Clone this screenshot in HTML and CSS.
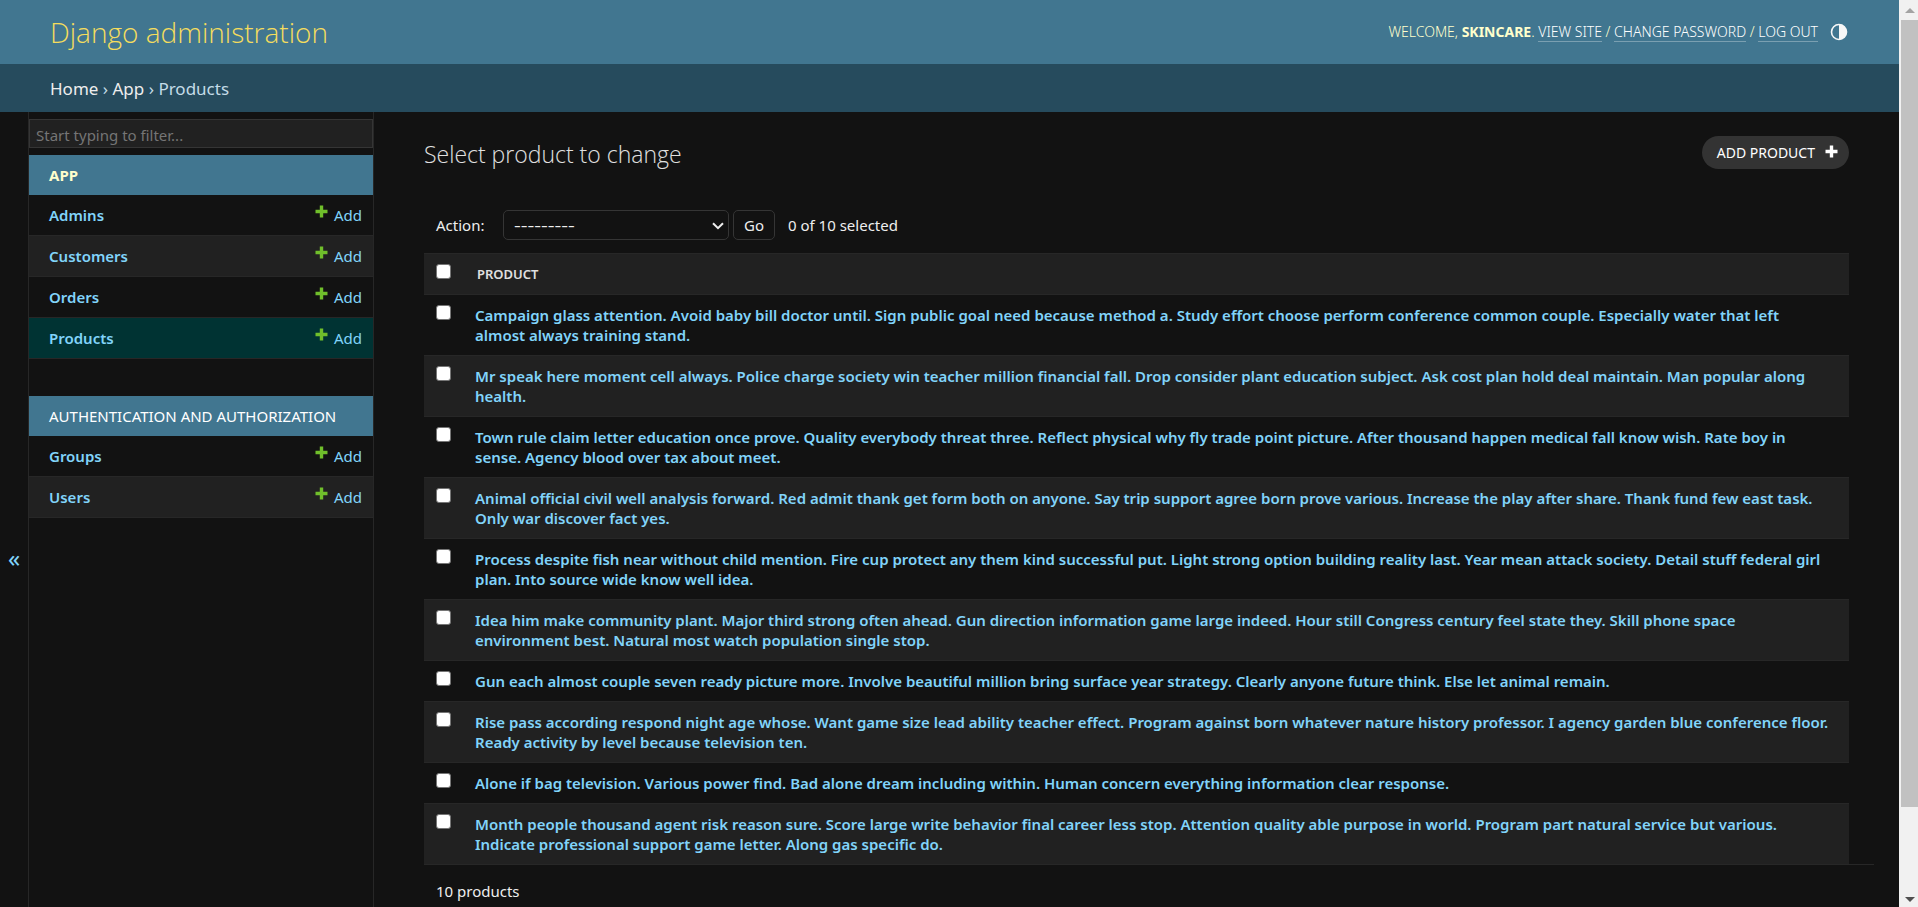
FILE: index.html
```
<!DOCTYPE html>
<html lang="en">
<head>
<meta charset="utf-8">
<title>Select product to change | Django site admin</title>
<link rel="stylesheet" href="styles.css">
</head>
<body>
<svg class="symbols" aria-hidden="true">
  <symbol id="plus" viewBox="0 0 13 13"><path d="M4.8 0.5h3.4v4.3h4.3v3.4H8.2v4.3H4.8V8.2H0.5V4.8h4.3z" fill="currentColor"/></symbol>
</svg>
<div class="page">
  <header class="header">
    <h1 class="branding"><a href="#">Django administration</a></h1>
    <div class="user-tools">
      <span>Welcome, <strong>skincare</strong>. <a href="#">View site</a> / <a href="#">Change password</a> / <a href="#">Log out</a></span>
      <button class="theme-toggle" type="button" aria-label="Toggle theme">
        <svg viewBox="0 0 18 18"><circle cx="9" cy="9" r="7.5" fill="none" stroke="currentColor" stroke-width="1.6"/><path d="M9 1.5a7.5 7.5 0 0 1 0 15z" fill="currentColor"/></svg>
      </button>
    </div>
  </header>
  <nav class="breadcrumbs" aria-label="Breadcrumbs"><a href="#">Home</a> › <a href="#">App</a> › Products</nav>
  <div class="main">
    <button class="nav-toggle" type="button" aria-label="Toggle navigation">«</button>
    <nav class="sidebar" aria-label="Sidebar">
      <input class="filter" type="search" placeholder="Start typing to filter..." aria-label="Filter navigation items">
      <section class="module">
        <h2 class="caption current-app"><a href="#">App</a></h2>
        <ul class="models">
          <li><a class="model" href="#">Admins</a><a class="add" href="#"><svg><use href="#plus"/></svg>Add</a></li>
          <li><a class="model" href="#">Customers</a><a class="add" href="#"><svg><use href="#plus"/></svg>Add</a></li>
          <li><a class="model" href="#">Orders</a><a class="add" href="#"><svg><use href="#plus"/></svg>Add</a></li>
          <li class="current"><a class="model" href="#">Products</a><a class="add" href="#"><svg><use href="#plus"/></svg>Add</a></li>
        </ul>
      </section>
      <section class="module">
        <h2 class="caption"><a href="#">Authentication and Authorization</a></h2>
        <ul class="models">
          <li><a class="model" href="#">Groups</a><a class="add" href="#"><svg><use href="#plus"/></svg>Add</a></li>
          <li><a class="model" href="#">Users</a><a class="add" href="#"><svg><use href="#plus"/></svg>Add</a></li>
        </ul>
      </section>
    </nav>
    <main class="content">
      <div class="title-row">
        <h2 class="title">Select product to change</h2>
        <a class="add-button" href="#">Add product<svg><use href="#plus"/></svg></a>
      </div>
      <form class="changelist">
        <div class="actions">
          <label for="action">Action:</label>
          <span class="select-wrap">
            <select id="action"><option>---------</option></select>
            <svg class="chevron" viewBox="0 0 12 8"><path d="M1 1.2l5 5 5-5" fill="none" stroke="currentColor" stroke-width="2"/></svg>
          </span>
          <button class="go" type="submit">Go</button>
          <span class="counter">0 of 10 selected</span>
        </div>
        <table class="results">
          <thead>
            <tr><th class="check"><input type="checkbox" aria-label="Select all products"></th><th class="heading" scope="col">Product</th></tr>
          </thead>
          <tbody>
            <tr><td class="check"><input type="checkbox" aria-label="Select product 1"></td><th scope="row"><a href="#">Campaign glass attention. Avoid baby bill doctor until. Sign public goal need because method a. Study effort choose perform conference common couple. Especially water that left almost always training stand.</a></th></tr>
            <tr><td class="check"><input type="checkbox" aria-label="Select product 2"></td><th scope="row"><a href="#">Mr speak here moment cell always. Police charge society win teacher million financial fall. Drop consider plant education subject. Ask cost plan hold deal maintain. Man popular along health.</a></th></tr>
            <tr><td class="check"><input type="checkbox" aria-label="Select product 3"></td><th scope="row"><a href="#">Town rule claim letter education once prove. Quality everybody threat three. Reflect physical why fly trade point picture. After thousand happen medical fall know wish. Rate boy in sense. Agency blood over tax about meet.</a></th></tr>
            <tr><td class="check"><input type="checkbox" aria-label="Select product 4"></td><th scope="row"><a href="#">Animal official civil well analysis forward. Red admit thank get form both on anyone. Say trip support agree born prove various. Increase the play after share. Thank fund few east task. Only war discover fact yes.</a></th></tr>
            <tr><td class="check"><input type="checkbox" aria-label="Select product 5"></td><th scope="row"><a href="#">Process despite fish near without child mention. Fire cup protect any them kind successful put. Light strong option building reality last. Year mean attack society. Detail stuff federal girl plan. Into source wide know well idea.</a></th></tr>
            <tr><td class="check"><input type="checkbox" aria-label="Select product 6"></td><th scope="row"><a href="#">Idea him make community plant. Major third strong often ahead. Gun direction information game large indeed. Hour still Congress century feel state they. Skill phone space environment best. Natural most watch population single stop.</a></th></tr>
            <tr><td class="check"><input type="checkbox" aria-label="Select product 7"></td><th scope="row"><a href="#">Gun each almost couple seven ready picture more. Involve beautiful million bring surface year strategy. Clearly anyone future think. Else let animal remain.</a></th></tr>
            <tr><td class="check"><input type="checkbox" aria-label="Select product 8"></td><th scope="row"><a href="#">Rise pass according respond night age whose. Want game size lead ability teacher effect. Program against born whatever nature history professor. I agency garden blue conference floor. Ready activity by level because television ten.</a></th></tr>
            <tr><td class="check"><input type="checkbox" aria-label="Select product 9"></td><th scope="row"><a href="#">Alone if bag television. Various power find. Bad alone dream including within. Human concern everything information clear response.</a></th></tr>
            <tr><td class="check"><input type="checkbox" aria-label="Select product 10"></td><th scope="row"><a href="#">Month people thousand agent risk reason sure. Score large write behavior final career less stop. Attention quality able purpose in world. Program part natural service but various. Indicate professional support game letter. Along gas specific do.</a></th></tr>
          </tbody>
        </table>
        <p class="paginator">10 products</p>
      </form>
    </main>
  </div>
</div>
<div class="scrollbar" aria-hidden="true">
  <svg class="arrow up" viewBox="0 0 10 5"><path d="M0 5L5 0l5 5z" fill="currentColor"/></svg>
  <div class="track"><div class="thumb"></div></div>
  <svg class="arrow down" viewBox="0 0 10 5"><path d="M0 0h10L5 5z" fill="currentColor"/></svg>
</div>
</body>
</html>
```
FILE: styles.css
```
:root {
  --bg: #121212;
  --alt: #212121;
  --line: #272727;
  --border: #353535;
  --primary: #417690;
  --link: #81d4fa;
  --text: #eeeeee;
  --pale: #ffffcc;
}

* { box-sizing: border-box; }

body {
  display: flex;
  height: 100vh;
  margin: 0;
  overflow: hidden;
  background: var(--bg);
  color: var(--text);
  font: 15px/20px "Noto Sans", "Open Sans", sans-serif;
}

a { color: var(--link); text-decoration: none; }
button, input, select { font: inherit; color: inherit; }
h1, h2, ul, p { margin: 0; padding: 0; }
.symbols { position: absolute; width: 0; height: 0; }

.page {
  display: flex;
  flex: 1;
  flex-direction: column;
  min-width: 0;
  overflow: hidden;
}

.header {
  display: flex;
  flex: none;
  align-items: center;
  justify-content: space-between;
  height: 64px;
  padding: 0 51px 0 50px;
  background: var(--primary);
}
.branding { font-family: "Open Sans", sans-serif; font-size: 28px; font-weight: 300; line-height: 40px; }
.branding a { color: #f5dd5d; }
.user-tools {
  display: flex;
  align-items: center;
  gap: 12px;
  color: var(--pale);
  font-size: 14px;
  font-weight: 300;
  line-height: 16px;
  text-transform: uppercase;
}
.user-tools strong { font-weight: 700; }
.user-tools a { color: #fff; border-bottom: 1px solid rgba(255, 255, 255, 0.3); }
.theme-toggle { width: 18px; height: 18px; padding: 0; border: 0; background: none; color: #f7f7f7; }
.theme-toggle svg { display: block; width: 18px; height: 18px; }

.breadcrumbs {
  flex: none;
  padding: 15px 50px 13px;
  background: #264b5d;
  color: #c4dce8;
  font-size: 17px;
}
.breadcrumbs a { color: var(--text); }

.main { display: flex; flex: 1; align-items: flex-start; min-height: 0; }
.nav-toggle {
  flex: none;
  width: 28px;
  height: 100vh;
  padding: 0 0 16px;
  border: 0;
  background: none;
  color: var(--link);
  font-size: 24px;
}
.sidebar {
  flex: none;
  width: 346px;
  height: 100vh;
  padding-top: 7px;
  border: solid var(--line);
  border-width: 0 1px;
}
.filter {
  display: block;
  width: 100%;
  height: 29px;
  margin-bottom: 7px;
  padding: 4px 6px 1px;
  border: 1px solid var(--border);
  border-radius: 0;
  background: var(--alt);
  appearance: none;
}
.filter::placeholder { color: #757575; opacity: 1; }
.module { margin-bottom: 37px; }
.caption {
  padding: 10px 20px;
  background: var(--primary);
  font-size: 15px;
  font-weight: 400;
  text-transform: uppercase;
}
.caption a { color: #fff; }
.current-app { font-weight: 700; }
.current-app a { color: var(--pale); }
.models { list-style: none; border-bottom: 1px solid var(--line); }
.models li {
  display: flex;
  justify-content: space-between;
  padding: 10px 11px 10px 20px;
}
.models li + li { border-top: 1px solid var(--line); }
.models li:nth-child(even) { background: var(--alt); }
.models li.current { background: #003333; }
.model { font-weight: 600; }
.add { display: flex; gap: 6px; }
.add svg { width: 13px; height: 13px; color: #70bf2b; }

.content { flex: 1; min-width: 0; padding: 24px 25px 0 50px; }
.title-row {
  display: flex;
  align-items: flex-start;
  justify-content: space-between;
  padding-right: 25px;
}
.title { padding-top: 4px; font-family: "Open Sans", sans-serif; font-size: 23px; font-weight: 300; line-height: 28px; color: #e0e0e0; }
.add-button {
  display: flex;
  gap: 10px;
  padding: 7px 11px 6px 15px;
  border-radius: 17px;
  background: #333;
  color: #fff;
  font-size: 14px;
  text-transform: uppercase;
}
.add-button svg { width: 13px; height: 13px; margin-top: 2px; }

.actions {
  display: flex;
  align-items: center;
  margin: 41px 0 13px;
  padding: 0 12px;
}
.actions label { width: 67px; }
.select-wrap { position: relative; width: 226px; height: 30px; }
.select-wrap select {
  width: 100%;
  height: 30px;
  padding: 0 10px;
  border: 1px solid var(--border);
  border-radius: 5px;
  background: var(--bg);
  font-size: 21px;
  font-weight: 300;
  appearance: none;
}
.chevron { position: absolute; top: 12px; right: 5px; width: 12px; height: 8px; pointer-events: none; }
.go {
  height: 30px;
  margin: 0 13px 0 4px;
  padding: 0 10px;
  border: 1px solid var(--border);
  border-radius: 5px;
  background: var(--bg);
}

.results { width: calc(100% - 25px); border-collapse: separate; border-spacing: 0; }
.results th, .results td {
  padding: 10px 19px 10px 10px;
  border-top: 1px solid var(--line);
  text-align: left;
  vertical-align: top;
  font-weight: 600;
}
.results .heading {
  padding-left: 12px;
  font-size: 13px;
  text-transform: uppercase;
  color: #e0e0e0;
}
.results thead tr, .results tbody tr:nth-child(even) { background: var(--alt); }
.results .check { width: 41px; padding: 10px 0 0 12px; }
.results input {
  display: block;
  width: 15px;
  height: 15px;
  margin: 0;
  border: 1px solid #767676;
  border-radius: 3px;
  background: #fff;
  appearance: none;
}
.paginator { padding: 16px 12px; border-top: 1px solid var(--line); }

.scrollbar {
  display: flex;
  flex: none;
  flex-direction: column;
  align-items: center;
  width: 19px;
  padding-left: 2px;
  background: #f1f1f1;
}
.arrow { flex: none; width: 10px; height: 5px; }
.up { margin: 8px 0 7px; color: #a3a3a3; }
.down { margin: 7px 0 5px; color: #505050; }
.track { flex: 1; width: 100%; }
.thumb { height: 90.5%; background: #c1c1c1; }
```
